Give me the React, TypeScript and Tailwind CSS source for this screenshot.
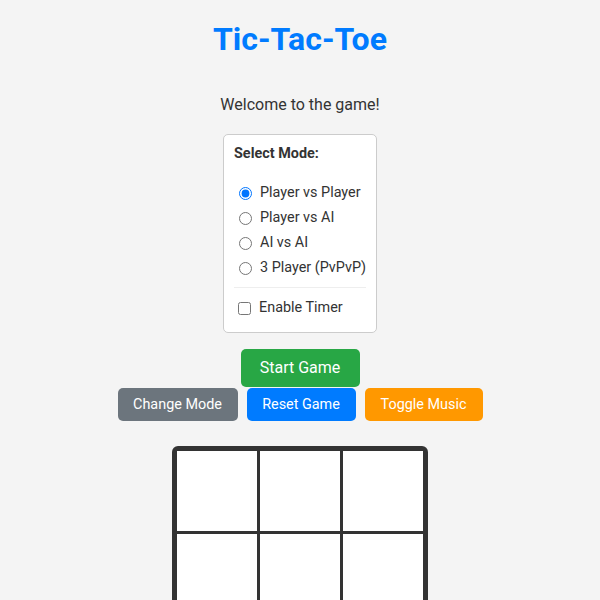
import { useState } from "react";

const modes = [
  { id: "pvp", label: "Player vs Player" },
  { id: "pvai", label: "Player vs AI" },
  { id: "aivai", label: "AI vs AI" },
  { id: "pvpvp", label: "3 Player (PvPvP)" },
];

const App = () => {
  const [mode, setMode] = useState("pvp");
  const [timer, setTimer] = useState(false);
  const [board, setBoard] = useState<string[]>(Array(9).fill(""));

  return (
    <div
      className="min-h-screen bg-[#f4f4f4] text-[#333] text-center flex flex-col items-center"
      style={{ fontFamily: "Roboto, 'Liberation Sans', sans-serif" }}
    >
      <h1 className="mt-[21px] text-[32px] font-bold text-[#007bff] leading-[37px]">
        Tic-Tac-Toe
      </h1>
      <p className="mt-[37px] text-[16px] leading-[19px]">Welcome to the game!</p>

      <div className="mt-[20px] w-[154px] h-[199px] bg-white border border-[#ccc] rounded-[5px] px-[10px] pt-[10px] text-left whitespace-nowrap">
        <p className="font-bold text-[14.4px] leading-[18px]">Select Mode:</p>
        <div className="mt-[21px] flex flex-col gap-[7px]">
          {modes.map((m) => (
            <label key={m.id} className="flex items-center gap-[8px] text-[14.4px] leading-[18px] pl-[5px]">
              <input
                type="radio"
                name="mode"
                checked={mode === m.id}
                onChange={() => setMode(m.id)}
                className="m-0 w-[13px] h-[13px]"
              />
              {m.label}
            </label>
          ))}
        </div>
        <div className="mt-[10px] border-t border-[#eee]" />
        <label className="mt-[11px] flex items-center gap-[8px] text-[14.4px] leading-[18px] pl-[4px]">
          <input
            type="checkbox"
            checked={timer}
            onChange={() => setTimer(!timer)}
            className="m-0 w-[13px] h-[13px]"
          />
          Enable Timer
        </label>
      </div>

      <button className="mt-[16px] w-[119px] h-[38px] bg-[#28a745] text-white text-[16px] rounded-[5px]">
        Start Game
      </button>
      <div className="mt-px flex gap-[9px]">
        <button className="w-[120px] h-[33px] bg-[#6c757d] text-white text-[14.4px] rounded-[5px]">
          Change Mode
        </button>
        <button
          onClick={() => setBoard(Array(9).fill(""))}
          className="w-[109px] h-[33px] bg-[#007bff] text-white text-[14.4px] rounded-[5px]"
        >
          Reset Game
        </button>
        <button className="w-[118px] h-[33px] bg-[#ff9800] text-white text-[14.4px] rounded-[5px]">
          Toggle Music
        </button>
      </div>

      <div className="mt-[25px] mb-[20px] border-[5px] border-[#333] rounded-[6px] bg-[#333] grid grid-cols-[repeat(3,80px)] gap-[3px]">
        {board.map((cell, i) => (
          <div
            key={i}
            onClick={() => {
              if (cell) return;
              const next = [...board];
              next[i] = "X";
              setBoard(next);
            }}
            className="w-[80px] h-[80px] bg-white flex items-center justify-center text-[40px] font-bold"
          >
            {cell}
          </div>
        ))}
      </div>
    </div>
  );
};

export default App;
